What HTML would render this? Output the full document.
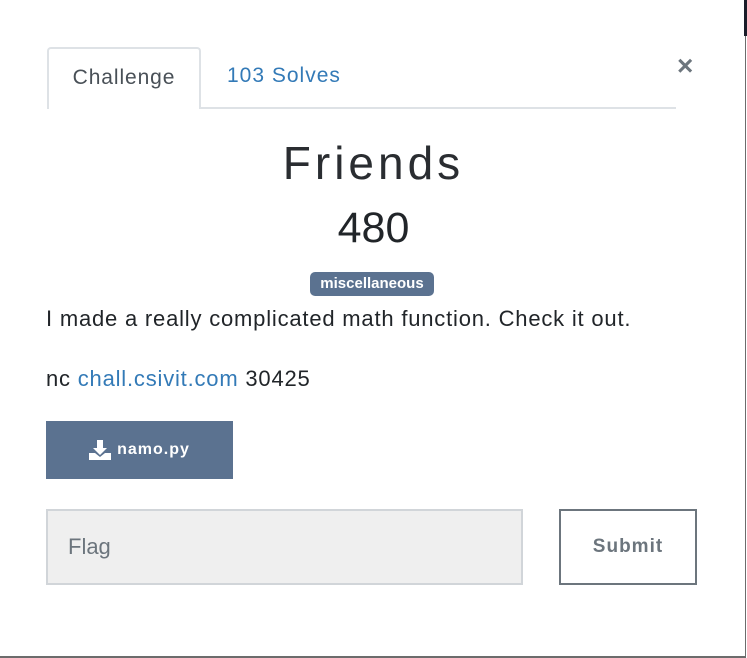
<!DOCTYPE html>
<html><head><style>
*{margin:0;padding:0;box-sizing:border-box}
body{width:747px;height:658px;background:#fff;position:relative;overflow:hidden;font-family:"Liberation Sans",sans-serif;color:#212529}
.frame{position:absolute;left:0;top:0;width:746px;height:658px;border-right:1px solid #6c6c6c;border-bottom:2px solid #6c6c6c}
.dark{position:absolute;right:0;top:0;width:3px;height:36px;background:#1a1d2a}
.tabline{position:absolute;left:47px;top:107px;width:629px;height:2px;background:#dee2e6}
.tab{position:absolute;left:47px;top:47px;width:154px;height:62px;border:2px solid #dee2e6;border-bottom:none;border-radius:4px 4px 0 0;background:#fff;font-size:21px;letter-spacing:0.9px;color:#495057;text-align:center;line-height:58px}
.solves{position:absolute;left:227px;top:64px;font-size:21px;letter-spacing:1px;color:#337ab7}
.x{position:absolute;left:677px;top:50px;font-size:28px;color:#6c757d;font-weight:bold}
.title{position:absolute;left:0;width:747px;text-align:center;top:136px;font-size:46px;letter-spacing:4px;color:#2a2d31}
.pts{position:absolute;left:0;width:747px;text-align:center;top:204px;font-size:43px}
.badge{position:absolute;left:310px;top:272px;width:124px;height:24px;background:#5b7290;color:#fff;border-radius:5px;font-size:15px;font-weight:bold;text-align:center;line-height:24px}
.p1{position:absolute;left:46px;top:306px;font-size:22px;letter-spacing:0.8px}
.p2{position:absolute;left:46px;top:366px;font-size:22px;letter-spacing:0.8px}
.p2 a{color:#337ab7;text-decoration:none}
.dl{position:absolute;left:46px;top:421px;width:187px;height:58px;background:#5b7290;color:#fff;font-size:16px;font-weight:bold;letter-spacing:1px;display:flex;align-items:center;justify-content:center;gap:6px}
.flag{position:absolute;left:46px;top:509px;width:477px;height:76px;background:#efefef;border:2px solid #d1d5d9;font-size:22px;color:#6c757d;padding-left:20px;line-height:72px}
.sub{position:absolute;left:559px;top:509px;width:138px;height:76px;border:2px solid #6c757d;font-size:19px;font-weight:bold;color:#6c757d;text-align:center;line-height:72px;letter-spacing:1px}
</style></head><body>
<div class="frame"></div><div class="dark"></div>
<div class="tabline"></div>
<div class="tab">Challenge</div>
<div class="solves">103 Solves</div>
<div class="x">×</div>
<div class="title">Friends</div>
<div class="pts">480</div>
<div class="badge">miscellaneous</div>
<div class="p1">I made a really complicated math function. Check it out.</div>
<div class="p2">nc <a>chall.csivit.com</a> 30425</div>
<div class="dl"><svg width="22" height="20" viewBox="0 0 22 20"><path d="M8 0h6v8h4l-7 7-7-7h4z" fill="#fff"/><path d="M0 13h6l5 4 5-4h6v7H0z" fill="#fff"/></svg>namo.py</div>
<div class="flag">Flag</div>
<div class="sub">Submit</div>
</body></html>
